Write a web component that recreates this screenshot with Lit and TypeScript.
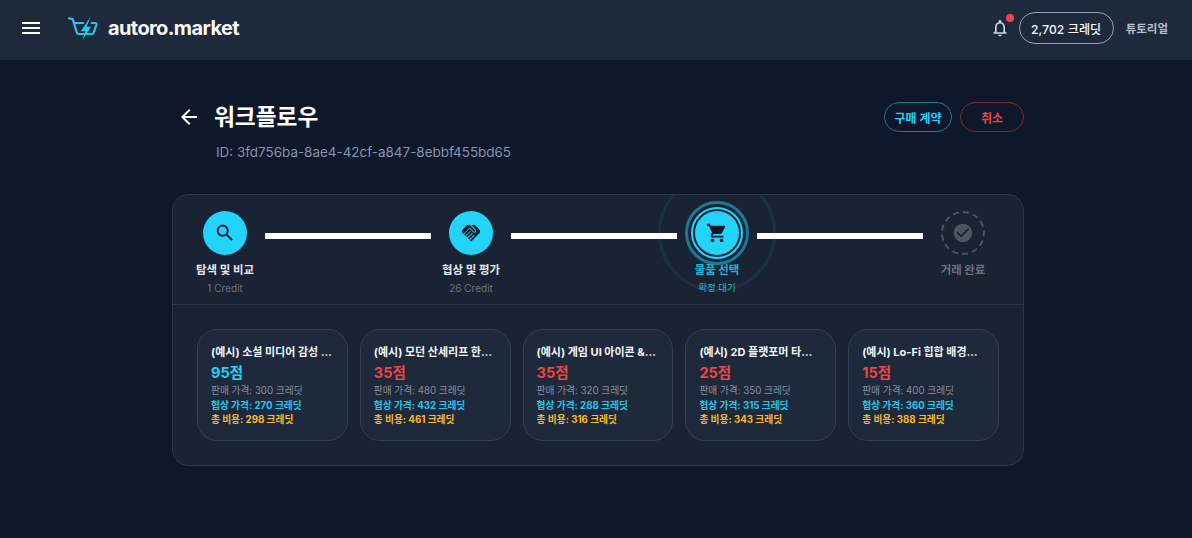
import { LitElement, html, css, svg } from 'lit'
import { customElement } from 'lit/decorators.js'

const ICONS = {
  menu: svg`<path d="M3 18h18v-2H3v2zm0-5h18v-2H3v2zm0-7v2h18V6H3z"/>`,
  bell: svg`<path d="M12 22c1.1 0 2-.9 2-2h-4c0 1.1.9 2 2 2zm6-6v-5c0-3.07-1.63-5.64-4.5-6.32V4c0-.83-.67-1.5-1.5-1.5s-1.5.67-1.5 1.5v.68C7.64 5.36 6 7.92 6 11v5l-2 2v1h16v-1l-2-2zm-2 1H8v-6c0-2.48 1.51-4.5 4-4.5s4 2.02 4 4.5v6z"/>`,
  back: svg`<path d="M20 11H7.83l5.59-5.59L12 4l-8 8 8 8 1.41-1.41L7.83 13H20v-2z"/>`,
  search: svg`<path d="M15.5 14h-.79l-.28-.27C15.41 12.59 16 11.11 16 9.5 16 5.91 13.09 3 9.5 3S3 5.91 3 9.5 5.91 16 9.5 16c1.61 0 3.09-.59 4.23-1.57l.27.28v.79l5 4.99L20.49 19l-4.99-5zm-6 0C7.01 14 5 11.99 5 9.5S7.01 5 9.5 5 14 7.01 14 9.5 11.99 14 9.5 14z"/>`,
  handshake: svg`<path d="M16.48 10.41c-.39.39-1.04.39-1.43 0l-4.47-4.46-7.05 7.04-.66-.63c-1.17-1.17-1.17-3.07 0-4.24l4.24-4.24c1.17-1.17 3.07-1.17 4.24 0L16.48 9c.39.39.39 1.02 0 1.41zm.7-2.12c.78.78.78 2.05 0 2.83-1.27 1.27-2.61.22-2.83 0l-3.76-3.76-5.57 5.57c-.39.39-.39 1.02 0 1.41.39.39 1.02.39 1.42 0l4.62-4.62.71.71-4.62 4.62c-.39.39-.39 1.02 0 1.41.39.39 1.02.39 1.42 0l4.62-4.62.71.71-4.62 4.62c-.39.39-.39 1.02 0 1.41.39.39 1.02.39 1.41 0l4.62-4.62.71.71-4.62 4.62c-.39.39-.39 1.02 0 1.41.39.39 1.02.39 1.41 0l8.32-8.34c1.17-1.17 1.17-3.07 0-4.24l-4.24-4.24c-1.15-1.15-3.01-1.17-4.18-.06l4.47 4.47z"/>`,
  cart: svg`<path d="M7 18c-1.1 0-1.99.9-1.99 2S5.9 22 7 22s2-.9 2-2-.9-2-2-2zM1 2v2h2l3.6 7.59-1.35 2.45c-.16.28-.25.61-.25.96 0 1.1.9 2 2 2h12v-2H7.42c-.14 0-.25-.11-.25-.25l.03-.12.9-1.63h7.45c.75 0 1.41-.41 1.75-1.03l3.58-6.49c.08-.14.12-.31.12-.48 0-.55-.45-1-1-1H5.21l-.94-2H1zm16 16c-1.1 0-1.99.9-1.99 2s.89 2 1.99 2 2-.9 2-2-.9-2-2-2z"/>`,
  check: svg`<path d="M12 2C6.48 2 2 6.48 2 12s4.48 10 10 10 10-4.48 10-10S17.52 2 12 2zm-2 15l-5-5 1.41-1.41L10 14.17l7.59-7.59L19 8l-9 9z"/>`,
}

const icon = (name: keyof typeof ICONS, size: number) =>
  html`<svg class="icon" width=${size} height=${size} viewBox="0 0 24 24" fill="currentColor">${ICONS[name]}</svg>`

interface Step {
  icon: keyof typeof ICONS
  label: string
  sub?: string
  state: 'done' | 'active' | 'pending'
}

const STEPS: Step[] = [
  { icon: 'search', label: '탐색 및 비교', sub: '1 Credit', state: 'done' },
  { icon: 'handshake', label: '협상 및 평가', sub: '26 Credit', state: 'done' },
  { icon: 'cart', label: '물품 선택', sub: '확정 대기', state: 'active' },
  { icon: 'check', label: '거래 완료', state: 'pending' },
]

const OFFERS = [
  { title: '(예시) 소셜 미디어 감성 일러스트 세트', score: 95, price: 300, deal: 270, total: 298 },
  { title: '(예시) 모던 산세리프 한글 폰트 패키지', score: 35, price: 480, deal: 432, total: 461 },
  { title: '(예시) 게임 UI 아이콘 & 버튼 에셋 팩', score: 35, price: 320, deal: 288, total: 316 },
  { title: '(예시) 2D 플랫포머 타일셋 그래픽 모음', score: 25, price: 350, deal: 315, total: 343 },
  { title: '(예시) Lo-Fi 힙합 배경음악 트랙 모음', score: 15, price: 400, deal: 360, total: 388 },
]

@customElement('app-root')
export class AppRoot extends LitElement {
  private renderStep(step: Step) {
    return html`
      <div class="step ${step.state}">
        <div class="circle">
          ${step.state === 'active'
            ? html`<span class="ring ring-inner"></span><span class="ring ring-mid"></span><span class="ring ring-outer"></span>`
            : ''}
          ${icon(step.icon, 22)}
        </div>
        <div class="step-label">${step.label}</div>
        ${step.sub ? html`<div class="step-sub">${step.sub}</div>` : ''}
      </div>
    `
  }

  render() {
    return html`
      <header class="topbar">
        <div class="brand">
          <span class="menu">${icon('menu', 24)}</span>
          <svg class="logo" width="30" height="25" viewBox="0 0 30 25" fill="none">
            <path d="M1 2.4 L4.7 3 L8.7 16.2 Q9.2 18 11 18 L24 18 Q25.4 18 25.8 16.4 L28.4 9 Q28.8 7 27 7 L23.8 7 M7 7 L15.2 7" stroke="#26c6ee" stroke-width="2.2" stroke-linecap="round" stroke-linejoin="round"/>
            <path d="M22.6 0.8 L12.8 15.2 L17.4 15.2 L14.4 24.2 L23 10.8 L18.6 10.8 Z" fill="#26c6ee"/>
          </svg>
          <span class="wordmark">autoro.market</span>
        </div>
        <div class="actions">
          <span class="bell">${icon('bell', 20)}<span class="dot"></span></span>
          <span class="credits">2,702 크레딧</span>
          <span class="tutorial">튜토리얼</span>
        </div>
      </header>

      <main class="page">
        <div class="title-row">
          <div class="title-left">
            <span class="back">${icon('back', 24)}</span>
            <h1>워크플로우</h1>
          </div>
          <div class="title-actions">
            <button class="outline cyan">구매 계약</button>
            <button class="outline red">취소</button>
          </div>
        </div>
        <div class="id-line">ID: 3fd756ba-8ae4-42cf-a847-8ebbf455bd65</div>

        <section class="panel">
          <div class="stepper">
            ${STEPS.map((step, i) => html`
              ${i > 0 ? html`<div class="bar"></div>` : ''}
              ${this.renderStep(step)}
            `)}
          </div>
          <div class="offers">
            ${OFFERS.map(o => html`
              <article class="offer">
                <div class="offer-title">${o.title}</div>
                <div class="score ${o.score >= 50 ? 'high' : 'low'}">${o.score}점</div>
                <div class="line">판매 가격: ${o.price} 크레딧</div>
                <div class="line deal">협상 가격: ${o.deal} 크레딧</div>
                <div class="line total">총 비용: ${o.total} 크레딧</div>
              </article>
            `)}
          </div>
        </section>
      </main>
    `
  }

  static styles = css`
    :host {
      display: block;
      min-height: 538px;
      background: #0f172a;
      color: #fff;
      font-family: Inter, "Noto Sans CJK KR", sans-serif;
    }

    .icon {
      display: block;
    }

    .topbar {
      box-sizing: border-box;
      height: 60px;
      background: #1e293b;
      display: flex;
      align-items: center;
      justify-content: space-between;
      padding: 0 24px 4px 19px;
    }

    .brand {
      display: flex;
      align-items: center;
    }

    .menu {
      margin-right: 25px;
    }

    .logo {
      display: block;
      margin-right: 10px;
    }

    .wordmark {
      font-size: 20px;
      font-weight: 700;
      letter-spacing: -0.6px;
      color: #f8fafc;
    }

    .actions {
      display: flex;
      align-items: center;
    }

    .bell {
      position: relative;
      color: #cbd5e1;
      margin-right: 9px;
    }

    .dot {
      position: absolute;
      top: -4px;
      right: -4px;
      width: 8px;
      height: 8px;
      border-radius: 50%;
      background: #ef4444;
    }

    .credits {
      box-sizing: border-box;
      width: 95px;
      height: 32px;
      border: 1px solid #94a3b8;
      border-radius: 16px;
      display: flex;
      align-items: center;
      justify-content: center;
      font-size: 12px;
      font-weight: 500;
      letter-spacing: 0.15px;
      color: #f8fafc;
      margin-right: 12px;
    }

    .tutorial {
      font-size: 11.5px;
      font-weight: 600;
      color: #b6bfcc;
    }

    .page {
      width: 852px;
      margin-left: 172px;
      padding-top: 42px;
    }

    .title-row {
      display: flex;
      justify-content: space-between;
      align-items: flex-start;
      height: 30px;
    }

    .title-left {
      display: flex;
      align-items: center;
      height: 30px;
    }

    .back {
      margin-left: 5px;
      margin-right: 13px;
    }

    h1 {
      margin: 0;
      font-size: 22.7px;
      font-weight: 700;
      line-height: 30px;
      color: #fff;
    }

    .title-actions {
      display: flex;
      gap: 8px;
    }

    .outline {
      box-sizing: border-box;
      height: 30px;
      border-radius: 15px;
      background: transparent;
      font-family: inherit;
      font-size: 12px;
      font-weight: 700;
      padding: 0;
    }

    .outline.cyan {
      width: 68px;
      color: #22d3fb;
      border: 1px solid #1a7a96;
    }

    .outline.red {
      width: 64px;
      color: #ef4444;
      border: 1px solid #7f2a30;
    }

    .id-line {
      margin-top: 11px;
      margin-left: 44px;
      font-size: 13.45px;
      line-height: 18px;
      color: #8595ad;
    }

    .panel {
      box-sizing: border-box;
      margin-top: 33px;
      height: 272px;
      border: 1px solid #2b3648;
      border-radius: 16px;
      background: #1a2333;
      overflow: hidden;
    }

    .stepper {
      box-sizing: border-box;
      height: 110px;
      display: flex;
      align-items: flex-start;
      padding: 16px 20px 0 12px;
      border-bottom: 1px solid #2b3648;
    }

    .step {
      width: 80px;
      flex: none;
      display: flex;
      flex-direction: column;
      align-items: center;
      white-space: nowrap;
    }

    .bar {
      flex: 1;
      height: 6px;
      margin-top: 22px;
      background: #fff;
    }

    .circle {
      position: relative;
      width: 44px;
      height: 44px;
      border-radius: 50%;
      display: flex;
      align-items: center;
      justify-content: center;
      background: #22d3fb;
      color: #0f172a;
    }

    .ring {
      position: absolute;
      border-radius: 50%;
      pointer-events: none;
    }

    .ring-inner {
      inset: -4px;
      border: 2px solid #22d3fb;
    }

    .ring-mid {
      inset: -10px;
      border: 3px solid #1b7a96;
    }

    .ring-outer {
      inset: -37px;
      border: 3px solid rgba(34, 211, 251, 0.08);
    }

    .step-label {
      margin-top: 6px;
      font-size: 11.4px;
      font-weight: 700;
      line-height: 18px;
      color: #e2e8f0;
    }

    .step-sub {
      margin-top: 2px;
      font-size: 10px;
      line-height: 14px;
      color: #6b7280;
    }

    .step.active .step-label {
      color: #1fb6d9;
    }

    .step.active .step-sub {
      color: #1fb6d9;
      font-size: 9.5px;
    }

    .step.pending .circle {
      box-sizing: border-box;
      background: transparent;
      border: 2px dashed #4b5563;
      color: #4b5563;
    }

    .step.pending .step-label {
      color: #6b7280;
    }

    .offers {
      display: grid;
      grid-template-columns: repeat(5, 1fr);
      gap: 12px;
      padding: 24px;
    }

    .offer {
      box-sizing: border-box;
      min-width: 0;
      height: 112px;
      padding: 14px 14.5px 0 13px;
      border: 1px solid #344054;
      border-radius: 20px;
      background: #1e293b;
    }

    .offer-title {
      font-size: 11px;
      font-weight: 700;
      line-height: 16px;
      color: #f1f5f9;
      white-space: nowrap;
      overflow: hidden;
      text-overflow: ellipsis;
    }

    .score {
      margin-top: 3px;
      margin-bottom: 1px;
      font-size: 14.5px;
      font-weight: 700;
      line-height: 20px;
    }

    .score.high {
      color: #22d3fb;
    }

    .score.low {
      color: #ef4444;
    }

    .line {
      font-size: 9.7px;
      line-height: 14.5px;
      color: #868f9e;
      white-space: nowrap;
    }

    .line.deal {
      color: #22c7ea;
      font-weight: 700;
    }

    .line.total {
      color: #f8bb24;
      font-weight: 700;
    }
  `
}

declare global {
  interface HTMLElementTagNameMap {
    'app-root': AppRoot
  }
}
